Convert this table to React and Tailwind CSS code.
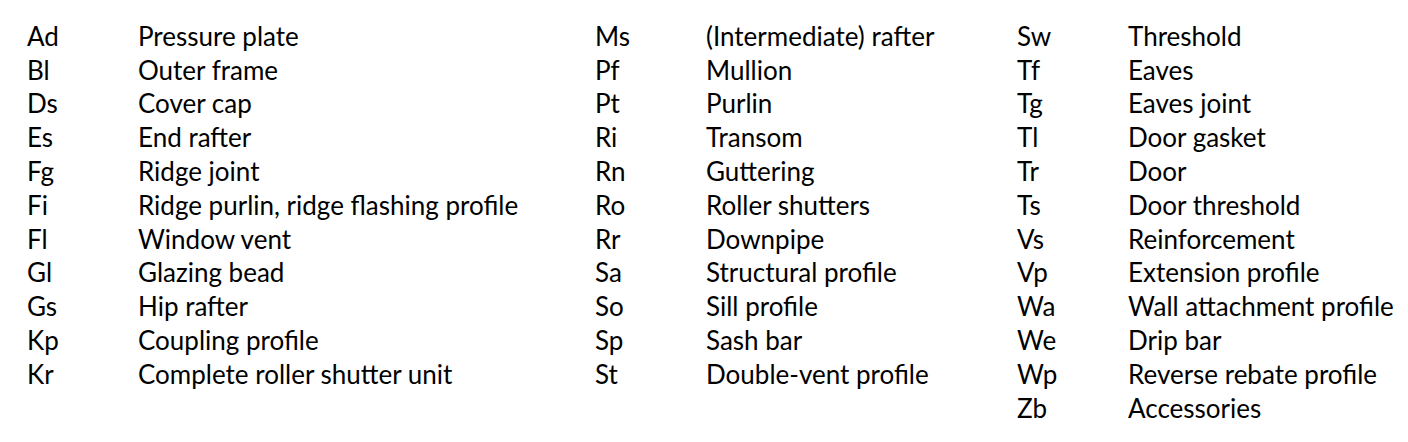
import React from 'react';

// Profile abbreviation legend, three columns
const columns = [
    {
        width: 'w-[568px]',
        items: [
            ['Ad', 'Pressure plate'],
            ['Bl', 'Outer frame'],
            ['Ds', 'Cover cap'],
            ['Es', 'End rafter'],
            ['Fg', 'Ridge joint'],
            ['Fi', 'Ridge purlin, ridge flashing profile'],
            ['Fl', 'Window vent'],
            ['Gl', 'Glazing bead'],
            ['Gs', 'Hip rafter'],
            ['Kp', 'Coupling profile'],
            ['Kr', 'Complete roller shutter unit'],
        ],
    },
    {
        width: 'w-[422px]',
        items: [
            ['Ms', '(Intermediate) rafter'],
            ['Pf', 'Mullion'],
            ['Pt', 'Purlin'],
            ['Ri', 'Transom'],
            ['Rn', 'Guttering'],
            ['Ro', 'Roller shutters'],
            ['Rr', 'Downpipe'],
            ['Sa', 'Structural profile'],
            ['So', 'Sill profile'],
            ['Sp', 'Sash bar'],
            ['St', 'Double-vent profile'],
        ],
    },
    {
        width: 'flex-1',
        items: [
            ['Sw', 'Threshold'],
            ['Tf', 'Eaves'],
            ['Tg', 'Eaves joint'],
            ['Tl', 'Door gasket'],
            ['Tr', 'Door'],
            ['Ts', 'Door threshold'],
            ['Vs', 'Reinforcement'],
            ['Vp', 'Extension profile'],
            ['Wa', 'Wall attachment profile'],
            ['We', 'Drip bar'],
            ['Wp', 'Reverse rebate profile'],
            ['Zb', 'Accessories'],
        ],
    },
];

function LegendColumn({ width, items }) {
    return (
        <div className={`${width} flex flex-col`}>
            {items.map(([code, label]) => (
                <div key={code} className="flex h-[33.8px] items-center">
                    <span className="w-[111px] shrink-0">{code}</span>
                    <span className="whitespace-nowrap">{label}</span>
                </div>
            ))}
        </div>
    );
}

export default function App() {
    return (
        <div
            className="w-[1408px] h-[442px] bg-white text-black flex pl-[27px] pt-[19px] text-[26px] leading-none"
            style={{ fontFamily: 'Lato, "Open Sans", sans-serif' }}
        >
            {columns.map((col, i) => (
                <LegendColumn key={i} width={col.width} items={col.items} />
            ))}
        </div>
    );
}
